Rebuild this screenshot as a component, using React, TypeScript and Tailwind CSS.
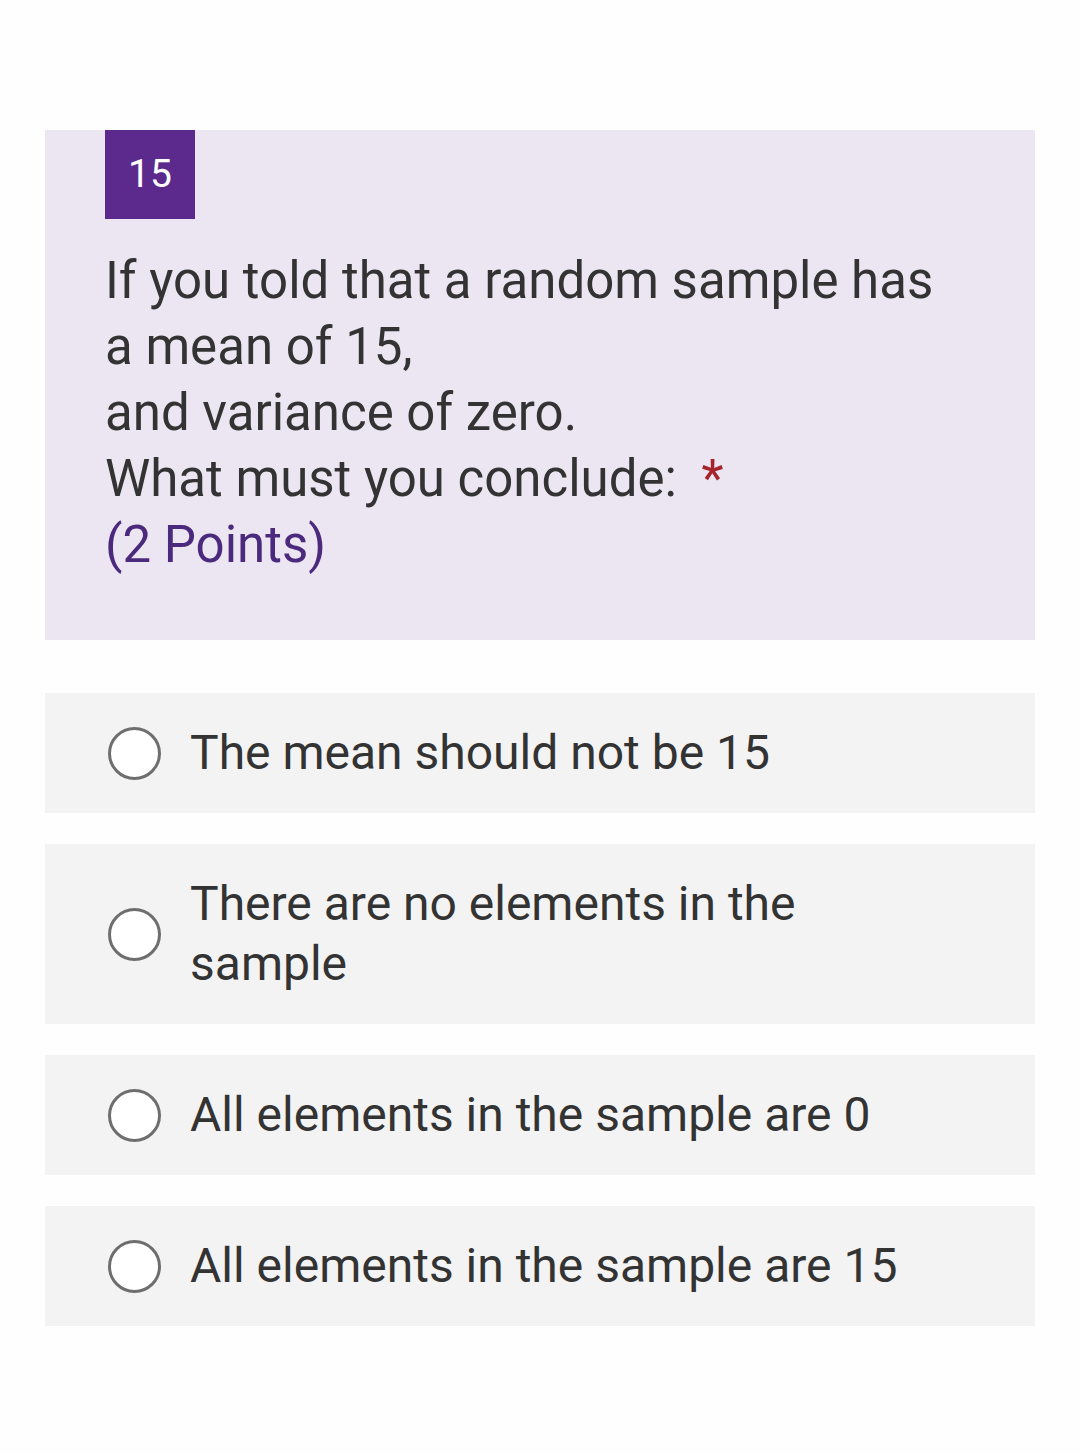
import React from "react";

const options = [
    "The mean should not be 15",
    "There are no elements in the sample",
    "All elements in the sample are 0",
    "All elements in the sample are 15",
];

function Radio() {
    return (
        <span className="shrink-0 w-[53px] h-[53px] rounded-full border-[3px] border-[#6e6e6e] bg-white" />
    );
}

export default function App() {
    return (
        <div
            className="min-h-[1454px] bg-[#fefefe] px-[45px] pt-[130px]"
            style={{ fontFamily: "Roboto, 'Noto Sans', sans-serif" }}
        >
            {/* question header */}
            <div className="bg-[#ece6f2] pl-[60px] pr-[85px] pb-[62px]">
                <div className="w-[90px] h-[89px] bg-[#5b2a8c] text-white text-[39px] flex items-center justify-center">
                    15
                </div>
                <div className="mt-[29px] text-[51px] leading-[66px] text-[#333333]">
                    <p>If you told that a random sample has a mean of 15,</p>
                    <p>and variance of zero.</p>
                    <p>
                        What must you conclude:{" "}
                        <span className="ml-[12px] text-[#a4262c]">*</span>
                    </p>
                    <p className="text-[#4b2a7d]">(2 Points)</p>
                </div>
            </div>

            {/* answers */}
            <div className="mt-[53px] flex flex-col gap-[31px]">
                {options.map((opt) => (
                    <div
                        key={opt}
                        className="bg-[#f3f3f3] flex items-center gap-[29px] pl-[63px] pr-[95px] py-[30px]"
                    >
                        <Radio />
                        <span className="text-[48px] leading-[60px] text-[#333333]">
                            {opt}
                        </span>
                    </div>
                ))}
            </div>
        </div>
    );
}
